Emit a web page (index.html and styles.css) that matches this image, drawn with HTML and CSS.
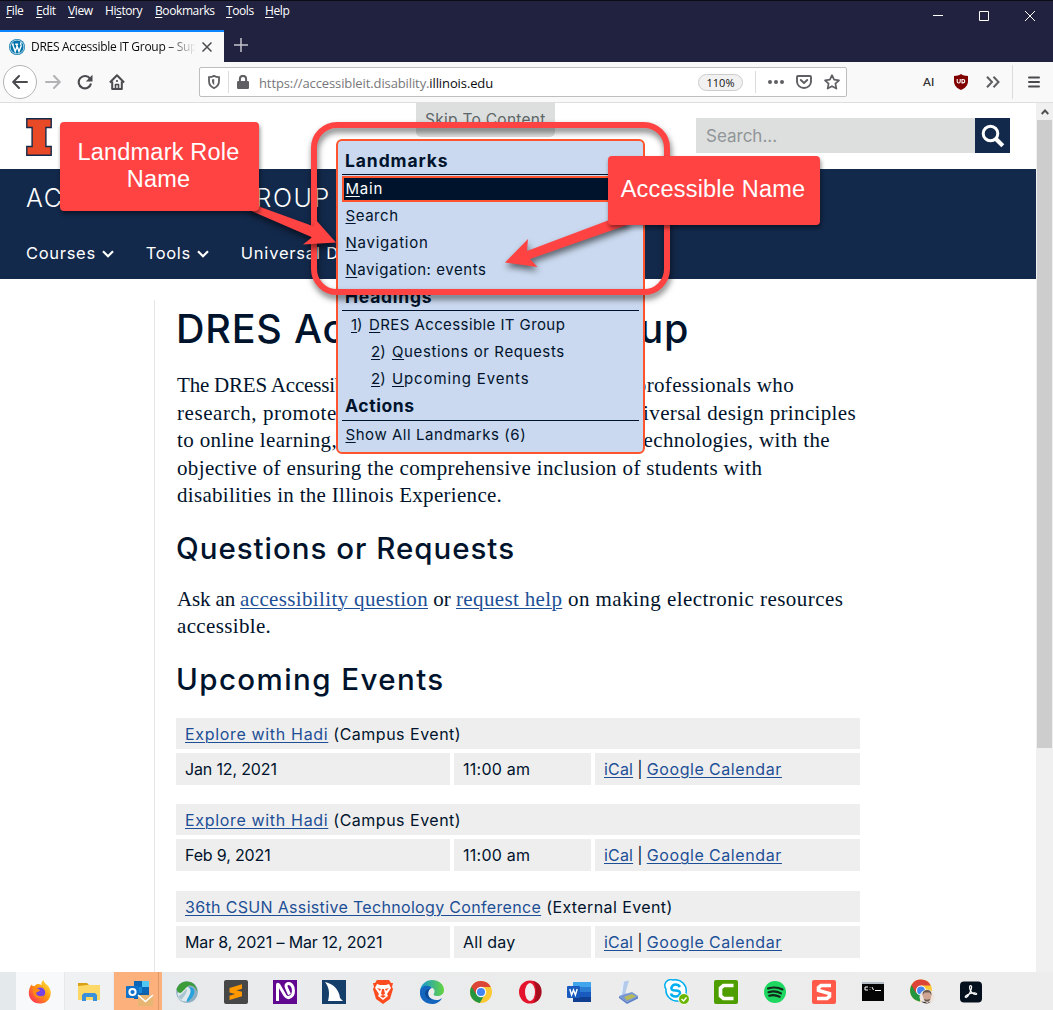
FILE: index.html
```html
<!DOCTYPE html>
<html lang="en">
<head>
<meta charset="utf-8">
<title>DRES Accessible IT Group</title>
<link rel="stylesheet" href="styles.css">
</head>
<body>
<div class="titlebar">
  <div class="menubar">
    <span><u>F</u>ile</span><span><u>E</u>dit</span><span><u>V</u>iew</span><span>Hi<u>s</u>tory</span><span><u>B</u>ookmarks</span><span><u>T</u>ools</span><span><u>H</u>elp</span>
  </div>
  <svg class="window-controls" width="104" height="12" viewBox="0 0 104 12" fill="none" stroke="#fff">
    <path d="M0 6.5H10M46.500 2.500h9v9h-9zM92 2l10 10M102 2L92 12"/>
  </svg>
  <div class="tab">
    <svg width="16" height="16" viewBox="0 0 16 16"><circle cx="8" cy="8" r="8" fill="#0073aa"/><circle cx="8" cy="8" r="6.900" fill="none" stroke="#fff" stroke-width=".7"/><path d="M2.800 5.200h2M3.600 5.200L6.200 12.500 8 7.500M6.200 5.200h3M7.400 5.200L10 12.500 12.400 6.200M12.200 6C11 4.800 12 3.500 12.500 3.400" fill="none" stroke="#fff" stroke-width="1.400"/></svg>
    <span class="tab-title">DRES Accessible IT Group – Supporting</span>
    <svg class="tab-close" width="10" height="10" viewBox="0 0 10 10" stroke="#4a4a4f" stroke-width="1.500"><path d="M.5.5l9 9M9.500.5l-9 9"/></svg>
  </div>
  <svg class="tab-new" width="14" height="14" viewBox="0 0 14 14" stroke="#c4c4cd" stroke-width="1.500"><path d="M7 0v14M0 7h14"/></svg>
</div>

<div class="toolbar">
  <div class="back"><svg width="16" height="14" viewBox="0 0 16 14" fill="none" stroke="#4a4a4f" stroke-width="2" stroke-linecap="round" stroke-linejoin="round"><path d="M15 7H1.500M7 1L1.200 7 7 13"/></svg></div>
  <svg class="fwd" width="16" height="14" viewBox="0 0 16 14" fill="none" stroke="#b3b3b6" stroke-width="2" stroke-linecap="round" stroke-linejoin="round"><path d="M1 7h13.500M9 1l5.800 6L9 13"/></svg>
  <svg class="reload" width="16" height="16" viewBox="0 0 16 16"><path d="M13 4.600A6.200 6.200 0 1 0 14 9.500" fill="none" stroke="#4a4a4f" stroke-width="2.100"/><path d="M15.500.8v6.700H8.800z" fill="#4a4a4f"/></svg>
  <svg class="home" width="16" height="16" viewBox="0 0 16 16" fill="none" stroke="#4a4a4f" stroke-width="2" stroke-linejoin="round"><path d="M.9 8.500L8 1.200l7.100 7.300M3.200 7.500V15h9.600V7.500"/><path d="M6.500 15v-4.500h3V15M8 6v2" stroke-width="1.600"/></svg>
  <div class="urlbar">
    <svg class="shield" width="12" height="14" viewBox="0 0 12 14"><path d="M6 .9c1.700 1 3.300 1.300 5 1.300V6c0 3.600-2 5.900-5 7.100C3 11.900 1 9.600 1 6V2.200C2.700 2.200 4.300 1.900 6 .9z" fill="none" stroke="#5f5f63" stroke-width="1.800"/><path d="M6.200 4v6.100C4.500 9 3.900 7.500 3.900 4.500z" fill="#5f5f63"/></svg>
    <i class="rule"></i>
    <svg class="lock" width="12" height="14" viewBox="0 0 12 14"><rect y="6" width="12" height="8" rx="1.200" fill="#5f5f63"/><path d="M2.900 7V4a3.100 3.100 0 0 1 6.200 0v3" fill="none" stroke="#5f5f63" stroke-width="2"/></svg>
    <span class="url">https://accessibleit.disability.<b>illinois.edu</b></span>
    <span class="zoom">110%</span>
    <i class="rule rule-actions"></i>
    <svg class="dots" width="16" height="4" viewBox="0 0 16 4" fill="#5f5f63"><circle cx="2" cy="2" r="2"/><circle cx="8" cy="2" r="2"/><circle cx="14" cy="2" r="2"/></svg>
    <svg class="pocket" width="16" height="14" viewBox="0 0 16 14" fill="none" stroke="#5f5f63" stroke-width="1.900" stroke-linecap="round" stroke-linejoin="round"><path d="M2 1h12a1 1 0 0 1 1 1v4.500a7 6.500 0 0 1-14 0V2a1 1 0 0 1 1-1zM4.800 5L8 8l3.200-3"/></svg>
    <svg class="star" width="16" height="16" viewBox="0 0 16 16" fill="none" stroke="#5f5f63" stroke-width="1.700" stroke-linejoin="round"><path d="M8 1.200l2.100 4.500 4.900.6-3.600 3.400 1 4.900L8 12.200l-4.400 2.400 1-4.900L1 6.300l4.900-.6z"/></svg>
  </div>
  <span class="ai">AI</span>
  <svg class="ublock" width="14" height="16" viewBox="0 0 14 16"><path d="M7 0c2 1.400 4.200 1.900 7 2v5c0 4.600-3 7.400-7 9C3 14.400 0 11.600 0 7V2c2.800-.1 5-.6 7-2z" fill="#800000"/><path d="M3.200 5v2.600q0 1.400 1.500 1.400t1.500-1.400V5M8 5.500v3.400h.8q2 0 2-1.700T8.800 5.500z" fill="none" stroke="#fff" stroke-width="1.100"/></svg>
  <svg class="more" width="14" height="12" viewBox="0 0 14 12" fill="none" stroke="#5f5f63" stroke-width="2"><path d="M1 .8L6 6 1 11.200M7.500.8l5 5.200-5 5.200"/></svg>
  <i class="rule rule-menu"></i>
  <svg class="burger" width="12" height="12" viewBox="0 0 12 12" stroke="#4a4a4f" stroke-width="2" stroke-linecap="round"><path d="M1 1.500h10M1 6h10M1 10.500h10"/></svg>
</div>

<div class="viewport">
  <div class="page">
    <header class="site-header">
      <svg width="26" height="38" viewBox="0 0 26 38"><path d="M.8.8h24.400v8.700h-5.300v19h5.300v8.700H.8v-8.700h5.300v-19H.8z" fill="#e84a27" stroke="#13294b" stroke-width="1.400"/></svg>
      <div class="search">
        <span class="search-field">Search...</span>
        <span class="search-button"><svg width="24" height="24" viewBox="0 0 24 24" fill="none" stroke="#fff"><circle cx="9.500" cy="9.500" r="7.300" stroke-width="3"/><path d="M15 15l6.800 6.800" stroke-width="4.200"/></svg></span>
      </div>
    </header>
    <nav class="site-nav">
      <div class="site-name">ACCESSIBLE IT GROUP</div>
      <div class="nav-items">
        <span class="nav-courses">Courses</span><svg width="12" height="8" viewBox="0 0 12 8"><path d="M1 1.200l5 5 5-5" fill="none" stroke="#fff" stroke-width="2.200"/></svg>
        <span class="nav-tools">Tools</span><svg width="12" height="8" viewBox="0 0 12 8"><path d="M1 1.200l5 5 5-5" fill="none" stroke="#fff" stroke-width="2.200"/></svg>
        <span class="nav-design">Universal Design</span>
      </div>
    </nav>
    <main class="content">
      <h1>DRES Accessible IT Group</h1>
      <div class="prose intro">
        <div class="line line-a"><span class="first">The DRES Accessible IT Group is a</span><span>team of IT professionals who</span></div>
        <div class="line line-b"><span class="second">research, promote and implement</span><span>accessible universal design principles</span></div>
        <div class="line line-c"><span>to online learning, documents</span><span>and information technologies, with the</span></div>
        <div class="line">objective of ensuring the comprehensive inclusion of students with</div>
        <div class="line last">disabilities in the Illinois Experience.</div>
      </div>
      <h2 class="h-questions">Questions or Requests</h2>
      <div class="prose ask">
        <div class="line"><span class="lead">Ask an </span><a>accessibility question</a><span class="or"> or </span><a>request help</a><span class="tail"> on making electronic resources</span></div>
        <div class="line">accessible.</div>
      </div>
      <h2 class="h-events">Upcoming Events</h2>
      <section class="event">
        <div class="cell title"><a class="t-hadi">Explore with Hadi</a> <span class="kind">(Campus Event)</span></div>
        <div class="cell date">Jan 12, 2021</div><div class="cell time">11:00 am</div><div class="cell links"><a>iCal</a> | <a class="t-google">Google Calendar</a></div>
      </section>
      <section class="event">
        <div class="cell title"><a class="t-hadi">Explore with Hadi</a> <span class="kind">(Campus Event)</span></div>
        <div class="cell date">Feb 9, 2021</div><div class="cell time">11:00 am</div><div class="cell links"><a>iCal</a> | <a class="t-google">Google Calendar</a></div>
      </section>
      <section class="event">
        <div class="cell title"><a class="t-csun">36th CSUN Assistive Technology Conference</a> <span class="kind">(External Event)</span></div>
        <div class="cell date">Mar 8, 2021 – Mar 12, 2021</div><div class="cell time">All day</div><div class="cell links"><a>iCal</a> | <a class="t-google">Google Calendar</a></div>
      </section>
    </main>
  </div>
  <div class="scrollbar">
    <svg width="8" height="6" viewBox="0 0 8 6"><path d="M.7 5L4 1.500 7.300 5" fill="none" stroke="#505050" stroke-width="1.900"/></svg>
    <div class="thumb"></div>
  </div>
</div>

<div class="taskbar">
  <div class="task task-open"><svg width="24" height="24" viewBox="0 0 24 24"><defs><linearGradient id="ff" x1="1" y1="0" x2="0" y2="1"><stop offset="0" stop-color="#fff44f"/><stop offset=".45" stop-color="#ff980e"/><stop offset="1" stop-color="#ff1d65"/></linearGradient></defs><path d="M3.500 4.500C4 6 5 6 6.500 6.200 8 4 9.500 4 10 4c2-.5 3 1 3.500 1C13 3 14 1 15.500 0c.5 3 3 4 5 6.500 3 4 2.600 8 1.500 10.500C20 21.500 16.500 23.500 12 23.500 5 23.500.8 18.500.8 13c0-3.500 1-6 2.700-8.500z" fill="url(#ff)"/><circle cx="12.200" cy="12.500" r="5" fill="#7542e5"/><path d="M4.500 8.500c3-1 5 0 7.500 1.500-.5 2-3 1.500-4 3 1 3.500 5 4 7.500 2.200C14 19.500 7.500 19.500 5.500 14z" fill="#ff8a16"/></svg></div>
  <div class="task task-light"><svg width="24" height="24" viewBox="0 0 24 24"><path d="M1 3h9l2 2v3H1z" fill="#d9a013"/><path d="M1 6l9-1h13v15H1z" fill="#fdd867"/><path d="M5 21v-6l2-2h11l2 2v6h-4v-4H9v4z" fill="#3a90db"/></svg></div>
  <div class="task task-alert"><svg width="28" height="26" viewBox="0 0 28 26"><path d="M8 1h15v17H8z" fill="#1688d8"/><path d="M16 1h7v6h-7z" fill="#52c7f4"/><path d="M8 1h8v6H8zM16 7h7v6h-7z" fill="#0a67b8"/><path d="M8 13h15v6H8z" fill="#1260a5"/><rect y="6" width="13" height="12" rx="1" fill="#0f72c9"/><circle cx="6.500" cy="12" r="3.100" fill="none" stroke="#fff" stroke-width="2"/><path d="M12 15h15v11H12z" fill="#e8b673"/><path d="M12 15l7.500 6.500L27 15" fill="none" stroke="#fff" stroke-width="1.500"/></svg></div>
  <div class="task"><svg width="24" height="24" viewBox="0 0 24 24"><circle cx="12" cy="12" r="10.800" fill="#8eafc2"/><circle cx="10" cy="14" r="7.500" fill="#dfe8ed"/><path d="M1.500 9C4 3 9 0 15 2c4 1 7 5 7.500 10-2-5-5-7-8-6.500-3 .5-5 5-9 7.500-2 0-3.500-1.500-4-4z" fill="#3c9c3a"/><path d="M3 16c4-1 6-5 9-7 0 4-3 8-6 11z" fill="#a9c5d2"/><path d="M14 7c5 0 7 4 4 9-1 2-4 5-6 6-1-2 1-4 2-6 2-4 2-6 0-9z" fill="#27a3dc"/></svg></div>
  <div class="task"><svg width="24" height="24" viewBox="0 0 24 24"><rect width="24" height="24" rx="2" fill="#474747"/><path d="M5.500 8L18 4.300v4.400L12.500 10.500l5.500 1.300v4.400L5.500 20v-4.300l5.700-1.800-5.700-1.500z" fill="#ff9800"/></svg></div>
  <div class="task"><svg width="24" height="24" viewBox="0 0 24 24"><path d="M0 0h24v24H0z" fill="#62078f"/><path d="M4.500 21V5q0-1.500 1.300 0L12 15.500Q14.500 19 18 16.500t2-9q-1.500-4.300-5-4-3 .8-1.500 4.500l3 6.500" fill="none" stroke="#fff" stroke-width="3"/></svg></div>
  <div class="task"><svg width="24" height="24" viewBox="0 0 24 24"><path d="M0 0h24v24H0z" fill="#153e6b"/><path d="M3 2c9 2 14 8 15 16l3 3H6C8 13 7 7 3 2z" fill="#fff"/></svg></div>
  <div class="task"><svg width="24" height="24" viewBox="0 0 24 24"><path d="M6 0h12l2 3h2l-1 4 1 2-3 10-7 5-7-5L2 9l1-2-1-4h2z" fill="#fb4b1f"/><path d="M6 4l3 1h6l3-1 2 4-4 6 1 2-5 4-5-4 1-2-4-6z" fill="#fff"/><path d="M6 8l4 1-1 2zM18 8l-4 1 1 2zM11 9h2l1 5-2 1-2-1zM9 16l3-1 3 1-3 2z" fill="#fb4b1f"/></svg></div>
  <div class="task"><svg width="24" height="24" viewBox="0 0 24 24"><defs><linearGradient id="eg"><stop stop-color="#1695d7"/><stop offset="1" stop-color="#63d43f"/></linearGradient></defs><path d="M0 11C1 4 6 0 12 0c7 0 12 4.500 12 10 0 4-3 6-7 6-3 0-4-1-3-2.500C16 10 13 7 9 7c-5 0-8 2-9 4z" fill="url(#eg)"/><path d="M0 11c1-5 8-7 12-3-5 1-5 9 0 11 4 2 8 1 10-1-2 4-6 6-10 6C5 24-1 19 0 11z" fill="#1465bd"/><path d="M10 9c-4 4-2 9 2 10.500-3 .5-7-2-7-6 0-3 2-4.500 5-4.500z" fill="#0b4a96"/></svg></div>
  <div class="task"><svg width="24" height="24" viewBox="0 0 24 24"><circle cx="12" cy="12" r="11" fill="#fbc934"/><path d="M12 12L2.500 6.500a11 11 0 0 0 8.300 16.400L16 14z" fill="#24963f"/><path d="M2.500 6.500A11 11 0 0 1 21.700 7H12v5l-5 2z" fill="#dc4437"/><circle cx="12" cy="12" r="5.200" fill="#fff"/><circle cx="12" cy="12" r="4" fill="#4285f4"/></svg></div>
  <div class="task"><svg width="24" height="24" viewBox="0 0 24 24"><ellipse cx="12" cy="12" rx="11" ry="11.500" fill="#e3142b"/><path d="M15 1c12 2 11 20 0 22 4-3 4-19 0-22z" fill="#a70e1e"/><ellipse cx="12" cy="12" rx="5" ry="9" fill="#efefef"/></svg></div>
  <div class="task"><svg width="24" height="24" viewBox="0 0 24 24"><path d="M6 2h18v5H6z" fill="#41a5ee"/><path d="M6 7h18v5H6z" fill="#2b7cd3"/><path d="M6 12h18v5H6z" fill="#185abd"/><path d="M6 17h18v5H6z" fill="#103f91"/><rect y="6" width="13" height="12" rx="1" fill="#185abd"/><path d="M2.800 9l1.800 6 1.900-5 1.900 5 1.800-6" fill="none" stroke="#fff" stroke-width="1.400"/></svg></div>
  <div class="task"><svg width="24" height="24" viewBox="0 0 24 24"><path d="M6 2l7-1.500-3.500 12L12 16l-7 1z" fill="#b4caea"/><path d="M6 2l2-.4-2 13-1 2-1-1z" fill="#e5effb"/><path d="M3 16l13-4 6 4-11 6z" fill="#7797d4"/><path d="M8 17l8-3 4 2.500-9 4z" fill="#b7b95a"/><path d="M3 16l8 6 11-6v2.500L11 24l-8-6z" fill="#5f82c9"/></svg></div>
  <div class="task"><svg width="26" height="26" viewBox="0 0 26 26"><path d="M1 5a6 6 0 0 1 8-4 11 11 0 0 1 13 13 6 6 0 0 1-8 8A11 11 0 0 1 2 10 6 6 0 0 1 1 5z" fill="#fff" stroke="#00aff0" stroke-width="1.500"/><path d="M16 8Q14.500 5.500 11.500 5.500T7.500 8.500t4 3 4.500 3-4.500 3T7 14.500" fill="none" stroke="#00aff0" stroke-width="2.500"/><circle cx="20" cy="20" r="5.500" fill="#6bb700" stroke="#fff"/><path d="M17.500 20l2 2 3-3.500" fill="none" stroke="#fff" stroke-width="1.400"/></svg></div>
  <div class="task"><svg width="24" height="24" viewBox="0 0 24 24"><rect width="24" height="24" rx="2" fill="#4f9e00"/><path d="M19.500 5.500H9.500L6.500 8v8l3 2.500h10" fill="none" stroke="#fff" stroke-width="3.600"/></svg></div>
  <div class="task"><svg width="24" height="24" viewBox="0 0 24 24"><circle cx="12" cy="12" r="11" fill="#1ed760"/><path d="M5 8.500q8-2.500 14.500 1M5.500 12.200q7-2 12.500 1.100M6.200 15.700q5.500-1.500 10.500 1.100" fill="none" stroke="#14251a" stroke-width="2.100" stroke-linecap="round"/></svg></div>
  <div class="task"><svg width="24" height="24" viewBox="0 0 24 24"><rect width="24" height="24" rx="2" fill="#ff5a49"/><path d="M19 5.500H9L6.500 7.500v3l11 3v3l-2.500 2H5" fill="none" stroke="#fff" stroke-width="3.600"/></svg></div>
  <div class="task"><svg width="24" height="24" viewBox="0 0 24 24"><path d="M1 2h22v19H1z" fill="#050505"/><path d="M1 2h22v2H1z" fill="#b4bdc6"/><path d="M7 7H4v3h3M9 7.500v.5M9 9.500v.5M11 7l1.500 3M14 10.500h6" fill="none" stroke="#fff"/></svg></div>
  <div class="task"><svg width="26" height="26" viewBox="0 0 26 26"><circle cx="12" cy="11.500" r="11" fill="#fbc934"/><path d="M12 12L2.500 6a11 11 0 0 0 8.300 16.400L15 15z" fill="#24963f"/><path d="M2.500 6A11 11 0 0 1 21.700 6.500H12V12l-5 2z" fill="#dc4437"/><circle cx="12" cy="11.500" r="5" fill="#fff"/><circle cx="12" cy="11.500" r="3.900" fill="#4285f4"/><circle cx="18" cy="18" r="7.500" fill="#eee5df"/><path d="M13.500 16q0-4.500 4.500-4.500t4.500 4.500l-1 5-3.500 2-3-2z" fill="#d0a593"/><path d="M13.500 16q0-5 4.500-5t4.500 5l-2-2.500h-5zM15 20l3 .8 3-.8-1 2.500h-4z" fill="#655850"/><path d="M12 22.500l4 .5 2 1 4-1.500q-4 4-10 0z" fill="#29282c"/></svg></div>
  <div class="task"><svg width="24" height="24" viewBox="0 0 24 24"><rect x="1" y="1.500" width="22" height="21" rx="4" fill="#04101d"/><path d="M11.500 5.500q2 0 .5 4.500Q9.500 16.500 7 17.500q-2-.5 1-2.500 4-2.500 8.500-2 2.500 1 0 1.500-4-1-5.500-5Q10 6 11.500 5.500z" fill="none" stroke="#fff" stroke-width="1.200"/></svg></div>
</div>

<a class="skip-link">Skip To Content</a>

<div class="skipto">
  <div class="group group-landmarks">Landmarks</div>
  <div class="item focus"><u>M</u>ain</div>
  <div class="item"><u>S</u>earch</div>
  <div class="item name-nav"><u>N</u>avigation</div>
  <div class="item"><u>N</u>avigation: events</div>
  <div class="group group-headings">Headings</div>
  <div class="item level1"><span class="num"><u>1</u>)</span><span class="name-dres"><u>D</u>RES Accessible IT Group</span></div>
  <div class="item level2"><span class="num"><u>2</u>)</span><span class="name-questions"><u>Q</u>uestions or Requests</span></div>
  <div class="item level2"><span class="num"><u>2</u>)</span><span class="name-events"><u>U</u>pcoming Events</span></div>
  <div class="group">Actions</div>
  <div class="item"><u>S</u>how All Landmarks (6)</div>
</div>

<div class="frame"></div>
<svg class="arrows" width="800" height="300" viewBox="0 0 800 300" fill="#ff4343">
  <path class="arrow" d="M249 205l10 1.500 55 20L316 220l20 22.500-33 2 9-7.200L249 210z"/>
  <path class="arrow" d="M608 220.500L527 251l1-12-23 23.500 32.500 4.500-7.500-8L630 224l-5-10z"/>
</svg>
<div class="callout callout-role">Landmark Role<br>Name</div>
<div class="callout callout-name">Accessible Name</div>
</body>
</html>
```
FILE: styles.css
```css
* { box-sizing: border-box; }
body {
  position: relative;
  width: 1053px;
  height: 1010px;
  margin: 0;
  overflow: hidden;
  background: #fff;
  color: #00132c;
  font-family: Inter, "Liberation Sans", sans-serif;
}
svg { display: block; flex: none; }
u { text-underline-offset: 2px; text-decoration-thickness: 1px; }

/* Browser window */
.titlebar {
  display: grid;
  grid-template: 29px 32px / 224px 1fr auto;
  height: 62px;
  background: #20223f;
  border-top: 1px solid #0c0c16;
}
.menubar {
  grid-column: 1 / 3;
  display: grid;
  grid-template-columns: 30px 32px 37px 50px 71px 39px 40px;
  padding-left: 6px;
  color: #fff;
  font: 12px/20px "Open Sans", sans-serif;
  letter-spacing: -.4px;
}
.window-controls { margin: 8px 16px 0 0; }
.tab {
  display: flex;
  align-items: center;
  grid-row: 2;
  padding-left: 9px;
  background: #f9f9fa;
  border-top: 2px solid #0a84ff;
}
.tab-title {
  width: 165px;
  margin-left: 6px;
  overflow: hidden;
  white-space: nowrap;
  color: #0c0c0d;
  font: 12px/20px "Open Sans", sans-serif;
  letter-spacing: -.3px;
  -webkit-mask-image: linear-gradient(90deg, #000 82%, transparent);
  mask-image: linear-gradient(90deg, #000 82%, transparent);
}
.tab-close { margin-left: 6px; }
.tab-new { align-self: center; margin: -2px 0 0 10px; }

.toolbar {
  display: flex;
  align-items: center;
  height: 41px;
  background: #f9f9fa;
  border-bottom: 1px solid #dededf;
}
.back {
  display: grid;
  place-items: center;
  width: 34px;
  height: 34px;
  margin-left: 3px;
  border: 1px solid #b4b4b6;
  border-radius: 50%;
  background: #fff;
}
.fwd { margin-left: 8px; }
.reload { margin-left: 16px; }
.home { margin-left: 16px; }
.urlbar {
  display: flex;
  align-items: center;
  width: 648px;
  height: 30px;
  margin-left: 74px;
  border: 1px solid #bebec0;
  border-radius: 2px;
  background: #fff;
}
.rule { width: 1px; height: 22px; background: #dcdcdd; }
.shield { margin: 0 8px 0 8px; }
.lock { margin: 0 10px 0 8px; }
.url {
  width: 439px;
  padding-top: 2px;
  color: #77777b;
  font: 13px/20px "Open Sans", sans-serif;
  letter-spacing: -.11px;
  white-space: nowrap;
}
.url b { color: #0c0c0d; font-weight: 400; }
.zoom {
  width: 45px;
  height: 17px;
  border: 1px solid #ccc;
  border-radius: 9px;
  background: #f1f1f2;
  color: #111;
  text-align: center;
  font: 11px/15px "Open Sans", sans-serif;
}
.rule-actions { margin: 0 12px; }
.pocket { margin-left: 12px; }
.star { margin-left: 12px; }
.ai { width: 14px; margin-left: 76px; color: #333; font: 600 11.5px/16px Lato, sans-serif; }
.ublock { margin-left: 17px; }
.more { margin-left: 18px; }
.rule-menu { height: 34px; margin-left: 12px; }
.burger { margin-left: 15px; }

.viewport { display: flex; height: 869px; overflow: hidden; }
.page { width: 1036px; flex: none; }
.scrollbar {
  display: flex;
  flex-direction: column;
  align-items: center;
  width: 17px;
  padding-top: 6px;
  background: #f0f0f0;
}
.thumb { width: 15px; height: 628px; margin-top: 5px; background: #cdcdcd; }

/* Site header */
.site-header {
  display: flex;
  justify-content: space-between;
  height: 66px;
  padding: 15px 26px 0;
}
.search { display: flex; height: 35px; }
.search-field {
  width: 279px;
  padding-left: 10px;
  background: #dcdfde;
  color: #919597;
  font-size: 17px;
  line-height: 37px;
}
.search-button { display: grid; place-items: center; width: 35px; background: #13294b; }
.site-nav { height: 110px; padding-left: 26px; background: #13294b; color: #fff; }
.site-name { font-size: 25px; font-weight: 350; line-height: 58px; letter-spacing: 1.58px; }
.nav-items { display: flex; align-items: center; height: 52px; font-size: 16.5px; }
.nav-items svg { margin: 2px 0 0 6px; }
.nav-courses { letter-spacing: .7px; }
.nav-tools { margin-left: 32px; letter-spacing: .6px; }
.nav-design { margin-left: 32px; letter-spacing: .8px; }

/* Page content */
.content {
  width: 800px;
  height: 680px;
  margin: 21px 0 0 154px;
  padding-left: 23px;
  border-left: 1px solid #e6e6e6;
}
h1, h2 { margin: 0 0 0 -2px; font-weight: 450; white-space: nowrap; }
h1 { font-size: 39.5px; line-height: 58px; letter-spacing: .79px; }
h2 { font-size: 29.5px; line-height: 40px; }
.h-questions { margin-top: 19px; letter-spacing: .98px; }
.h-events { margin-top: 19px; letter-spacing: 1.42px; }
.prose {
  margin-left: -1px;
  font: 21px/27.5px "Liberation Serif", serif;
  letter-spacing: .35px;
  white-space: nowrap;
}
.intro { padding-top: 14px; margin-bottom: -1px; }
.ask { padding-top: 18px; margin-bottom: -1px; }
.line { display: block; height: 27.5px; }
.line-a, .line-b, .line-c { display: flex; justify-content: space-between; }
.line-a { width: 617px; }
.line-b { width: 679px; }
.line-c { width: 653px; }
.last { letter-spacing: .3px; }
.first { letter-spacing: -.2px; }
.second { letter-spacing: .55px; }
.lead { letter-spacing: -.15px; }
.or { letter-spacing: 0; }
.tail { letter-spacing: .45px; }
a { color: #1d4f96; text-decoration: underline 1px; text-underline-offset: 2px; }

.event {
  display: grid;
  grid-template-columns: 274px 137px 265px;
  grid-template-rows: 31px 32px;
  gap: 4px;
  width: 684px;
  margin: 0 0 19.5px -2px;
  font-size: 16px;
  letter-spacing: .5px;
  line-height: 32px;
}
.h-events + .event { margin-top: 19px; }
.cell { height: 32px; padding-left: 9px; background: #eee; white-space: nowrap; }
.title { grid-column: 1 / 4; height: 31px; line-height: 32px; }
.date { letter-spacing: -.15px; }
.time { letter-spacing: .25px; }
.links { letter-spacing: .17px; word-spacing: -.6px; }
.t-google { letter-spacing: .6px; }
.t-hadi { letter-spacing: .67px; }
.t-csun { letter-spacing: .33px; }
.t-csun + .kind { letter-spacing: .4px; }

/* Taskbar */
.taskbar {
  display: flex;
  gap: 1px;
  height: 38px;
  padding-left: 16px;
  background: linear-gradient(90deg, #e4e9ec, #eaebec 30%, #eeeded);
}
.task { display: grid; place-items: center; width: 48px; padding-top: 2px; }
.task-open { background: #f8f9fa; }
.task-light { background: #f0f1f2; }
.task-alert { padding: 3px 0 0 3px; background: #fcb07c; box-shadow: inset -3px 0 #fcb07c, inset -4px 0 #df9869; }

/* Skip link and its menu float above the page */
.skip-link {
  position: absolute;
  left: 416px;
  top: 103px;
  width: 139px;
  height: 34px;
  padding-left: 9px;
  border-radius: 0 0 5px 5px;
  background: #dcdfde;
  color: #5e6669;
  font-size: 15.5px;
  line-height: 34px;
  letter-spacing: .28px;
  text-decoration: none;
}
.skipto {
  position: absolute;
  left: 336px;
  top: 139px;
  width: 309px;
  height: 315px;
  padding: 5px 4px 4px;
  border: 2px solid #ff552e;
  border-radius: 6px;
  background: #cad9ef;
  font-size: 15px;
  letter-spacing: .55px;
  white-space: nowrap;
}
.group {
  height: 29px;
  padding-left: 3px;
  border-bottom: 1px solid #00132c;
  font-size: 17.5px;
  font-weight: 700;
  line-height: 28px;
  letter-spacing: .6px;
}
.group-landmarks { line-height: 30px; letter-spacing: .9px; }
.group-headings { height: 28px; letter-spacing: .75px; }
.item { display: flex; height: 27px; padding-left: 3.500px; line-height: 27px; }
.focus {
  height: 26px;
  margin-top: 1px;
  padding-left: 1.500px;
  border: 2px solid #ff552e;
  background: #00132c;
  color: #fff;
  line-height: 21px;
  letter-spacing: .8px;
}
.level1 { padding-left: 9px; }
.level2 { padding-left: 29px; }
.num { width: 18px; letter-spacing: 0; }
.level2 .num { width: 21px; }
.name-nav { letter-spacing: .75px; }
.name-dres { letter-spacing: .41px; }
.name-questions { letter-spacing: .61px; }
.name-events { letter-spacing: .87px; }

/* Annotations */
.frame {
  position: absolute;
  left: 311px;
  top: 122px;
  width: 359px;
  height: 173px;
  border: 6px solid #ff4343;
  border-radius: 26px;
  filter: drop-shadow(1px 4px 3px rgba(0, 0, 0, .55));
}
.arrows { position: absolute; left: 0; top: 0; }
.arrow { filter: drop-shadow(1px 4px 3px rgba(0, 0, 0, .55)); }
.callout {
  position: absolute;
  display: grid;
  place-content: center;
  border-radius: 4px;
  background: #ff4343;
  box-shadow: 1px 3px 4px rgba(0, 0, 0, .45);
  color: #fff;
  font: 23.5px/27px "Liberation Sans", sans-serif;
  letter-spacing: .2px;
  text-align: center;
}
.callout-role { left: 60px; top: 122px; width: 199px; height: 89px; padding: 0 2px 2px 0; }
.callout-name { left: 608px; top: 156px; width: 212px; height: 69px; padding: 0 2px 3px 0; }
```
